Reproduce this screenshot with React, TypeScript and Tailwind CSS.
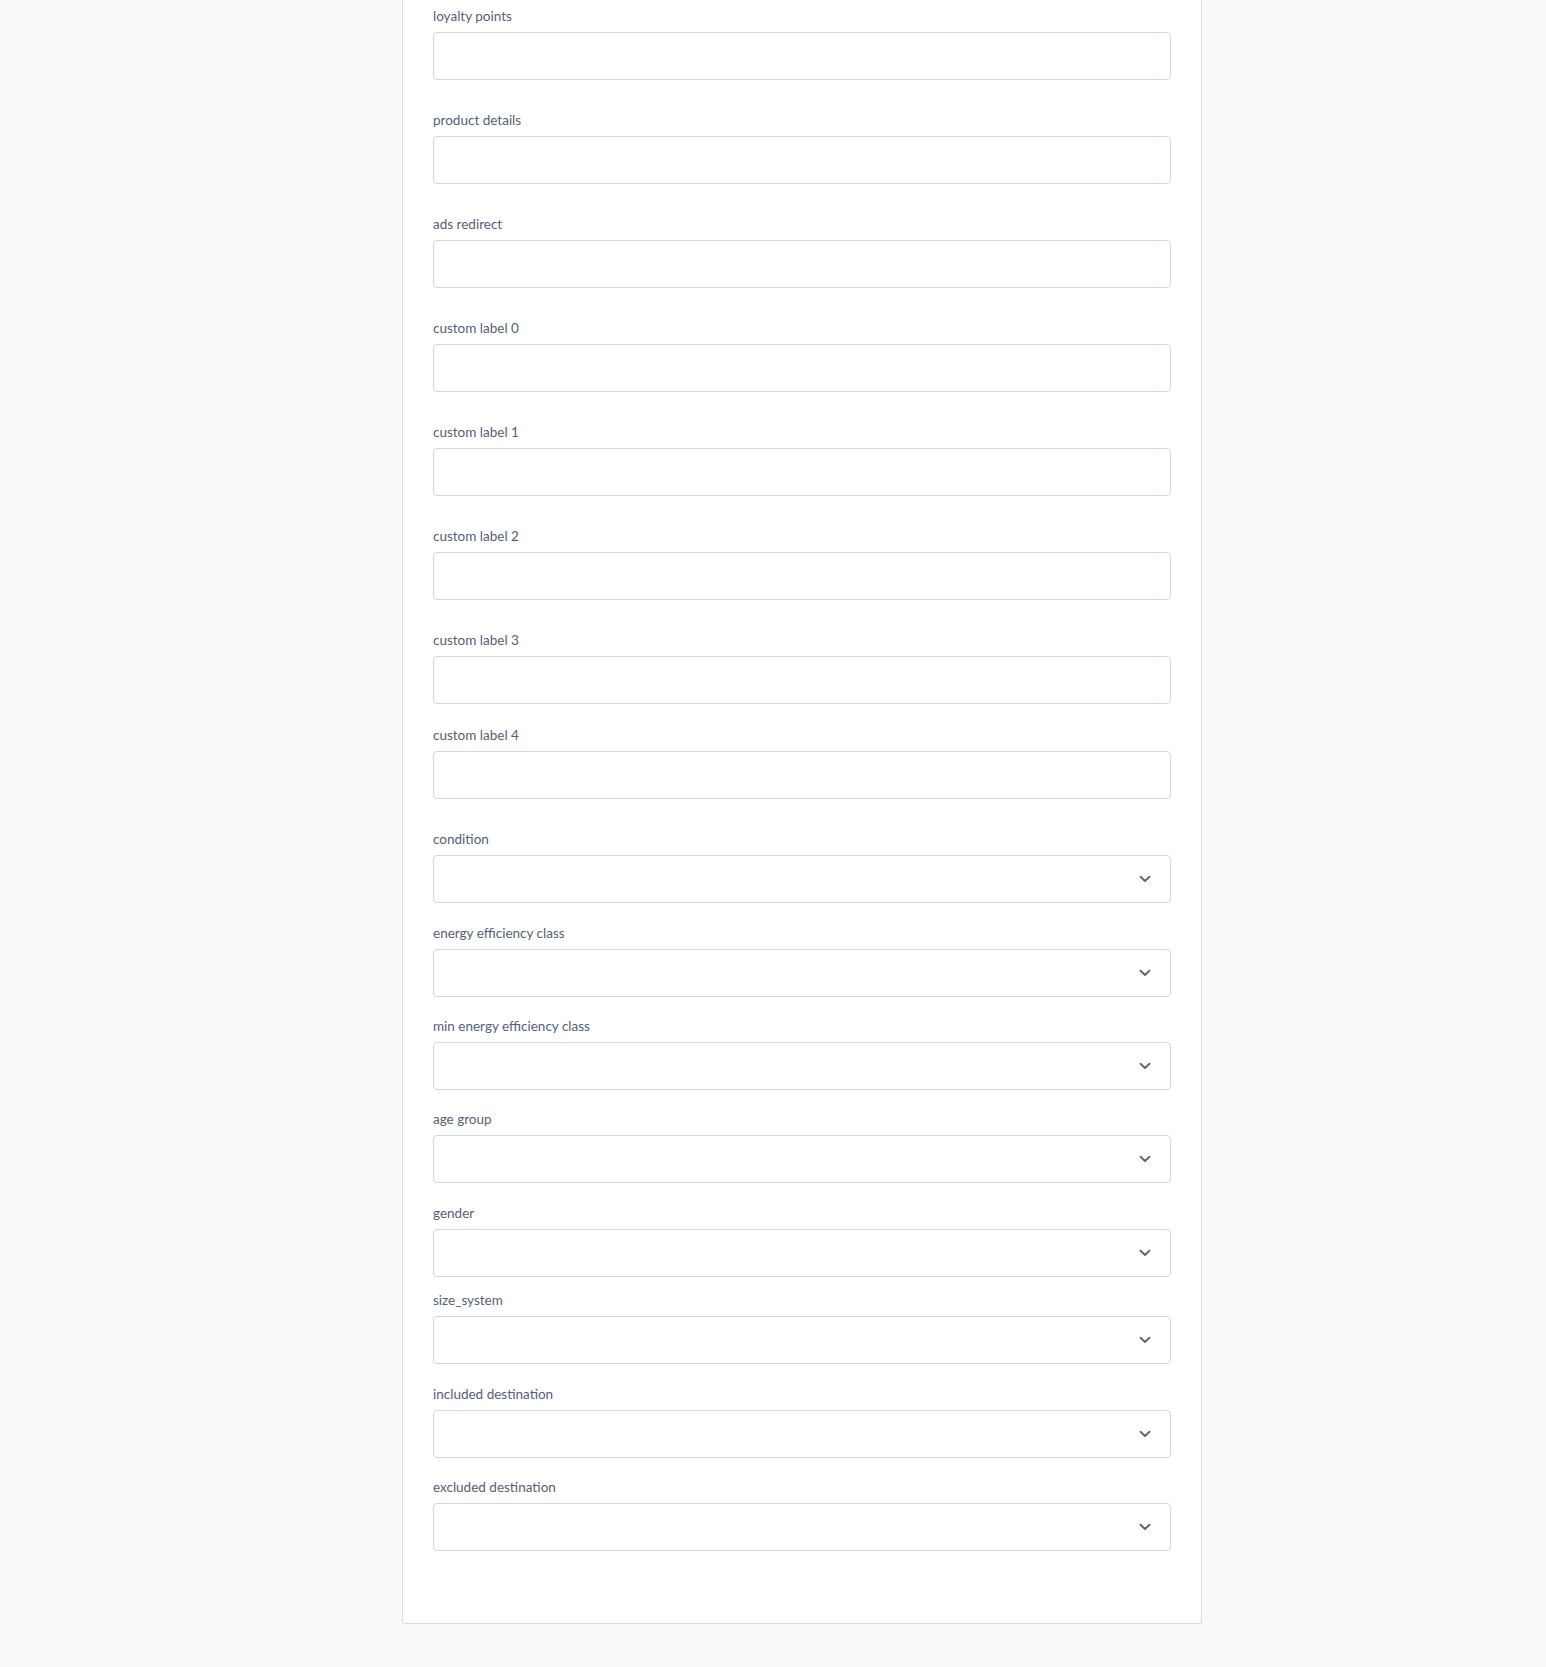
import React from 'react';

type Field = {
  label: string;
  kind: 'text' | 'select';
  gap: string;
};

const fields: Field[] = [
  { label: 'loyalty points', kind: 'text', gap: 'mt-0' },
  { label: 'product details', kind: 'text', gap: 'mt-[32px]' },
  { label: 'ads redirect', kind: 'text', gap: 'mt-[32px]' },
  { label: 'custom label 0', kind: 'text', gap: 'mt-[32px]' },
  { label: 'custom label 1', kind: 'text', gap: 'mt-[32px]' },
  { label: 'custom label 2', kind: 'text', gap: 'mt-[32px]' },
  { label: 'custom label 3', kind: 'text', gap: 'mt-[32px]' },
  { label: 'custom label 4', kind: 'text', gap: 'mt-[23px]' },
  { label: 'condition', kind: 'select', gap: 'mt-[32px]' },
  { label: 'energy efficiency class', kind: 'select', gap: 'mt-[22px]' },
  { label: 'min energy efficiency class', kind: 'select', gap: 'mt-[21px]' },
  { label: 'age group', kind: 'select', gap: 'mt-[21px]' },
  { label: 'gender', kind: 'select', gap: 'mt-[22px]' },
  { label: 'size_system', kind: 'select', gap: 'mt-[15px]' },
  { label: 'included destination', kind: 'select', gap: 'mt-[22px]' },
  { label: 'excluded destination', kind: 'select', gap: 'mt-[21px]' },
];

const Chevron = () => (
  <svg width="12" height="8" viewBox="0 0 12 8" fill="none" className="shrink-0">
    <path d="M1.5 1.8 L6 6 L10.5 1.8" stroke="#5b6a7e" strokeWidth="2" strokeLinecap="round" strokeLinejoin="round" />
  </svg>
);

export default function App() {
  return (
    <div className="min-h-[1667px] w-full bg-[#f8f9fb] pl-[402px] font-['Lato','Noto_Sans',sans-serif]">
      <div className="w-[800px] bg-white border border-t-0 border-[#d7dde5] rounded-b-[3px] px-[30px] pt-[8px] pb-[72px]">
        {fields.map((f) => (
          <div key={f.label} className={`flex flex-col ${f.gap}`}>
            <label className="text-[13.5px] leading-[16px] text-[#536175] mb-[8px]">{f.label}</label>
            {f.kind === 'text' ? (
              <input
                type="text"
                className="h-[48px] w-[738px] rounded-[4px] border border-[#d0d7e0] bg-white px-3 outline-none"
              />
            ) : (
              <div className="h-[48px] w-[738px] rounded-[4px] border border-[#d0d7e0] bg-white flex items-center justify-end pr-[19px]">
                <Chevron />
              </div>
            )}
          </div>
        ))}
      </div>
    </div>
  );
}
